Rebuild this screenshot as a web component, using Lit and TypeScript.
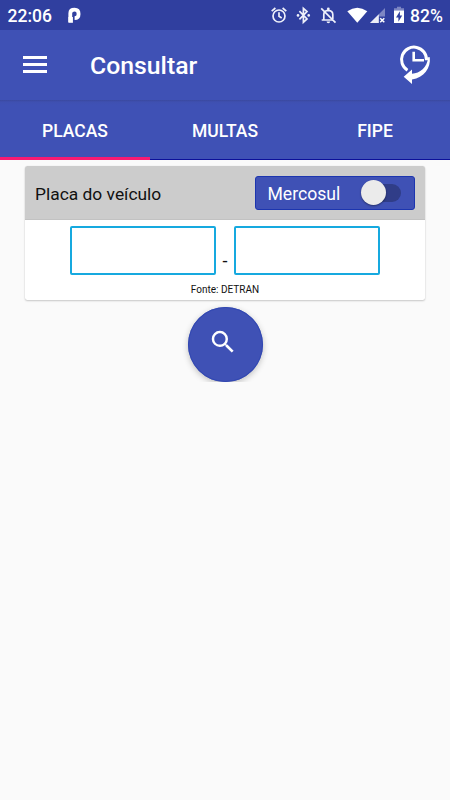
import { LitElement, html, css, svg } from "lit";
import { customElement, property, state } from "lit/decorators.js";
import { classMap } from "lit/directives/class-map.js";

@customElement("status-bar")
class StatusBar extends LitElement {
  static styles = css`
    :host { display: flex; align-items: center; height: 30px; background: #303f9f; color: #fff; font: 500 18px/30px Roboto, sans-serif; }
    .time { margin-left: 7.5px; width: 60.5px; font-size: 17.5px; padding-top: 2px; box-sizing: border-box; }
    .icons { margin-left: auto; width: 148px; height: 30px; }
    .level { width: 40px; font-size: 17.5px; padding-top: 2px; box-sizing: border-box; white-space: nowrap; }
    svg { display: block; }
  `;
  render() {
    return html`
      <span class="time">22:06</span>
      <svg width="14" height="30" viewBox="0 0 14 30">
        <path d="M2.3 22V13.2Q2.3 9.7 6.6 9.7Q10.6 9.7 10.6 14Q10.6 18.2 6.6 18.2" fill="none" stroke="#fff" stroke-width="3.8" />
        <path d="M.4 17H4.9V22.8H.4z" fill="#fff" />
      </svg>
      <svg class="icons" viewBox="262 0 148 30">
        <g fill="none" stroke="#eef0fa" stroke-width="1.7">
          <circle cx="279" cy="16" r="6" />
          <path d="M279 12.2V16.3L281.7 18M271.7 11.2L275.4 8M286.3 11.2L282.6 8" />
          <path d="M299.4 11.2L307 18.9L303.4 22.3V8.4L307 11.6L299.4 19.4" />
          <path d="M323.8 19.6V14.6Q323.8 10.6 328.3 10.4Q332.8 10.6 332.8 14.8V19M321.7 20H333" />
          <path d="M321.2 8.3L335.5 22.7" />
        </g>
        <g fill="#eef0fa">
          <circle cx="298" cy="15.4" r="1.3" /><circle cx="308.7" cy="15.4" r="1.3" />
          <circle cx="328.3" cy="9" r="1.4" /><path d="M326.6 21.6h3.5a1.7 1.7 0 0 1-3.5 0z" />
        </g>
        <path d="M347.3 11.2Q357.3 4.2 367.3 11.2L357.3 22.8z" fill="#fff" />
        <path d="M385 8V16.5H378.5V23H370z" fill="#7d86c3" />
        <path d="M378.8 14.2V23H370z" fill="#fff" opacity=".85" />
        <path d="M380.2 18.2L384.3 22.3M384.3 18.2L380.2 22.3" stroke="#fff" stroke-width="1.5" />
        <path d="M394 10.7V8.3H397V6.8H401V8.3H404V10.7z" fill="#7d86c3" />
        <path d="M394 10.5H404V23H394z" fill="#fff" />
        <path d="M399.9 11.2L396 17.4H398.4V21.7L402.2 15.5H399.9z" fill="#303f9f" />
      </svg>
      <span class="level">82%</span>
    `;
  }
}

@customElement("app-bar")
class AppBar extends LitElement {
  @property() heading = "";
  static styles = css`
    :host { display: flex; align-items: center; height: 70px; background: #3f51b5; color: #fff; font-family: Roboto, sans-serif; }
    .menu { display: grid; gap: 4px; width: 24px; margin-left: 23px; margin-top: -1px; }
    .menu i { height: 3px; background: #fff; }
    h1 { margin: 1px 0 0 43px; font-size: 24.8px; font-weight: 500; line-height: 30px; }
    .history { display: block; margin: 0 16px 0 auto; }
  `;
  render() {
    return html`
      <div class="menu"><i></i><i></i><i></i></div>
      <h1>${this.heading}</h1>
      <svg class="history" width="36" height="44" viewBox="398 43 36 44">
        <path d="M407.5 70.3A12.5 12.5 0 1 1 426.5 60.2" fill="none" stroke="#fff" stroke-width="3" />
        <path d="M413.7 51.8V60.3H424" fill="none" stroke="#fff" stroke-width="2.6" />
        <path d="M403.7 76.7L412 69.6V73.8C420 73 427 68 428.3 57L429.8 57.3C431 68 424 78 412 79.4V84.1z" fill="#fff" />
      </svg>
    `;
  }
}

@customElement("tab-strip")
class TabStrip extends LitElement {
  @state() private active = 0;
  private tabs = ["PLACAS", "MULTAS", "FIPE"];
  static styles = css`
    :host { display: grid; grid-template-columns: repeat(3, 1fr); height: 60px; background: linear-gradient(#3a499f, #3f50b1 2px, #3f51b5 5px); color: #fff; font: 500 17.5px/60px Roboto, sans-serif; text-align: center; }
    .tab { box-sizing: border-box; height: 60px; padding-top: 1px; border-bottom: 1px solid #0c109a; cursor: pointer; }
    .active { border-bottom: 3px solid #f71a73; }
  `;
  render() {
    return this.tabs.map((name, i) => html`
      <div class=${classMap({ tab: true, active: i === this.active })} @click=${() => (this.active = i)}>${name}</div>`);
  }
}

@customElement("plate-card")
class PlateCard extends LitElement {
  @state() private mercosul = false;
  static styles = css`
    :host { display: block; box-sizing: border-box; height: 134px; margin: 6px 25px 0; border-radius: 2.5px; background: #fff; color: #111; box-shadow: 0 1px 2px rgba(0, 0, 0, .2), 0 0 1px rgba(0, 0, 0, .12); font-family: Roboto, sans-serif; overflow: hidden; }
    .head { display: flex; align-items: center; justify-content: space-between; box-sizing: border-box; height: 54px; padding: 0 10px; background: #ccc; border-bottom: 1px solid #c2c2c2; font-size: 17.4px; }
    .title { padding-top: 2px; }
    .toggle { display: flex; align-items: center; box-sizing: border-box; width: 160px; height: 34px; padding: 0 13px 0 11.5px; border: 1px solid #1c35af; border-radius: 3px; background: #3f51b5; color: #fff; cursor: pointer; }
    .toggle span { padding-top: 2px; font-size: 17.6px; }
    .track { display: flex; align-items: center; width: 40px; height: 18px; margin-left: auto; border-radius: 9px; background: #303d88; }
    .on { justify-content: flex-end; }
    .thumb { flex: none; width: 25px; height: 25px; border-radius: 50%; background: #ebebeb; box-shadow: 0 1px 2px rgba(0, 0, 0, .4); }
    .plate { display: flex; justify-content: center; margin-top: 6px; font-size: 18px; }
    .box { box-sizing: border-box; width: 146px; height: 49px; border: 2px solid #16a9df; border-radius: 2px; background: #fff; padding: 8px; font: 20px Roboto, sans-serif; outline: none; }
    .dash { width: 18px; padding-top: 24px; line-height: 22px; text-align: center; }
    .source { margin-top: 8px; font-size: 10px; line-height: 14px; text-align: center; }
  `;
  render() {
    return html`
      <div class="head">
        <span class="title">Placa do veículo</span>
        <div class="toggle" @click=${() => (this.mercosul = !this.mercosul)}>
          <span>Mercosul</span>
          <div class=${classMap({ track: true, on: this.mercosul })}><div class="thumb"></div></div>
        </div>
      </div>
      <div class="plate"><input class="box" maxlength="3" /><span class="dash">-</span><input class="box" maxlength="4" /></div>
      <div class="source">Fonte: DETRAN</div>
    `;
  }
}

@customElement("app-root")
class AppRoot extends LitElement {
  static styles = css`
    :host { display: block; height: 800px; background: #fafafa; overflow: hidden; }
    .action { display: flex; justify-content: center; height: 75px; padding-top: 6.5px; overflow: hidden; }
    .search { display: grid; place-items: center; flex: none; width: 75px; height: 75px; padding: 0 5px 5px 0; box-sizing: border-box; border: 0; border-radius: 50%; background: #3f51b5; box-shadow: inset 0 0 0 1px #3248b2, 0 2px 6px rgba(0, 0, 0, .24); }
  `;
  render() {
    return html`
      <status-bar></status-bar>
      <app-bar heading="Consultar"></app-bar>
      <tab-strip></tab-strip>
      <plate-card></plate-card>
      <div class="action">
        <button class="search" aria-label="Buscar">
          <svg width="30" height="30" viewBox="0 0 24 24">${svg`<path fill="#fff" d="M15.5 14h-.79l-.28-.27A6.471 6.471 0 0 0 16 9.5 6.5 6.5 0 1 0 9.5 16c1.61 0 3.09-.59 4.23-1.57l.27.28v.79l5 4.99L20.49 19l-4.99-5zm-6 0C7.01 14 5 11.99 5 9.5S7.01 5 9.5 5 14 7.01 14 9.5 11.99 14 9.5 14z"/>`}</svg>
        </button>
      </div>
    `;
  }
}
